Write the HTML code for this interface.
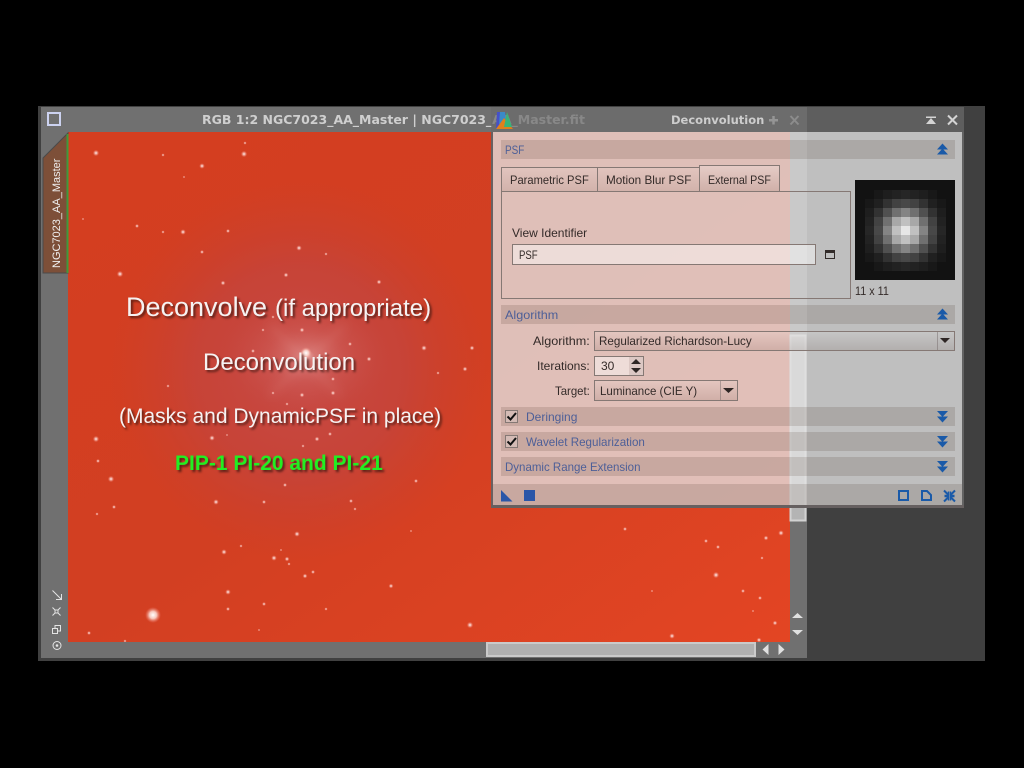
<!DOCTYPE html>
<html><head><meta charset="utf-8"><style>
html,body{margin:0;padding:0;background:#000;width:1024px;height:768px;overflow:hidden;font-family:"Liberation Sans",sans-serif}
div,span,svg{position:absolute}
svg{overflow:visible}
.t{white-space:nowrap;line-height:1;font-family:"Liberation Sans",sans-serif}
.ui{font-size:12px;color:#332a28;white-space:nowrap;line-height:14px;transform-origin:0 0}
.bar{left:501px;width:454px;height:19px;background:rgba(40,15,0,.13)}
.bt{font-size:12px;color:#4d5f98;white-space:nowrap;line-height:14px;transform-origin:0 0}
.sl{color:#f6f2f2;white-space:nowrap;line-height:1;text-shadow:2px 2px 2px rgba(50,20,15,.75)}
.tab{border:1px solid #857874;border-bottom:none;box-sizing:border-box;background:linear-gradient(rgba(255,255,255,.08),rgba(90,60,50,.1))}
.fld{border:1px solid #857874;box-sizing:border-box}
.psf{left:864.5px;top:189.5px;width:81px;height:81px;display:grid;grid-template-columns:repeat(9,9px);grid-auto-rows:9px}
.psf b{display:block}
</style></head><body>
<div style="left:38px;top:106px;width:947px;height:555px;background:#404040"></div>
<div style="left:41px;top:107px;width:766px;height:551px;background:#707070"></div>

<svg style="left:0;top:0" width="1024" height="768" viewBox="0 0 1024 768">
<defs>
<linearGradient id="b" x1="0" y1="0" x2="1" y2="1"><stop offset="0" stop-color="#d43e20"/><stop offset=".5" stop-color="#d23f22"/><stop offset="1" stop-color="#e34523"/></linearGradient>
<radialGradient id="n" gradientUnits="userSpaceOnUse" cx="300" cy="370" r="190"><stop offset="0" stop-color="#c64c4a" stop-opacity=".9"/><stop offset=".55" stop-color="#c24540" stop-opacity=".7"/><stop offset="1" stop-color="#c64030" stop-opacity="0"/></radialGradient>
<radialGradient id="c"><stop offset="0" stop-color="#fff" stop-opacity=".6"/><stop offset=".1" stop-color="#f0c0c0" stop-opacity=".35"/><stop offset=".45" stop-color="#dc8080" stop-opacity=".2"/><stop offset="1" stop-color="#c85050" stop-opacity="0"/></radialGradient>
<radialGradient id="s" r=".4"><stop offset="0" stop-color="#fff" stop-opacity=".95"/><stop offset=".4" stop-color="#f8c0b8" stop-opacity=".75"/><stop offset="1" stop-color="#f08070" stop-opacity="0"/></radialGradient>
<radialGradient id="bs"><stop offset="0" stop-color="#fff"/><stop offset=".45" stop-color="#fbd8d0" stop-opacity=".9"/><stop offset="1" stop-color="#f08070" stop-opacity="0"/></radialGradient>
<clipPath id="im"><rect x="68" y="132" width="722" height="510"/></clipPath>
<filter id="bl"><feGaussianBlur stdDeviation="5"/></filter>
</defs>
<g clip-path="url(#im)">
<rect x="68" y="132" width="722" height="510" fill="url(#b)"/>
<ellipse cx="300" cy="370" rx="190" ry="190" fill="url(#n)"/>
<ellipse cx="306" cy="356" rx="85" ry="60" fill="url(#c)"/>
<g stroke="#f4c8c8" stroke-opacity=".3" stroke-width="2" filter="url(#bl)"><path d="M270 325L340 395M345 325L270 395"/></g>
<circle cx="153" cy="615" r="8" fill="url(#bs)"/>
<circle cx="306" cy="353" r="6" fill="url(#bs)"/>
<g fill="url(#s)">
<circle cx="96" cy="153" r="4"/><circle cx="244" cy="154" r="4"/><circle cx="202" cy="166" r="3.5"/><circle cx="120" cy="274" r="4"/><circle cx="183" cy="232" r="3.5"/><circle cx="299" cy="248" r="3.5"/><circle cx="286" cy="275" r="3"/><circle cx="223" cy="283" r="3"/><circle cx="379" cy="282" r="3"/>
<circle cx="245" cy="143" r="2"/><circle cx="163" cy="155" r="2"/><circle cx="137" cy="226" r="2.5"/><circle cx="163" cy="232" r="2"/><circle cx="228" cy="231" r="2.5"/><circle cx="202" cy="252" r="2.5"/><circle cx="326" cy="254" r="2"/><circle cx="83" cy="219" r="1.5"/><circle cx="184" cy="177" r="1.5"/>
<circle cx="369" cy="359" r="3"/><circle cx="168" cy="386" r="2"/><circle cx="302" cy="330" r="3"/><circle cx="273" cy="317" r="2"/><circle cx="263" cy="330" r="2"/><circle cx="253" cy="351" r="2.5"/><circle cx="350" cy="344" r="2.5"/><circle cx="333" cy="379" r="2.5"/><circle cx="333" cy="393" r="3"/><circle cx="302" cy="395" r="3"/><circle cx="273" cy="393" r="2"/><circle cx="212" cy="438" r="3.5"/><circle cx="227" cy="435" r="1.5"/><circle cx="317" cy="439" r="3"/><circle cx="303" cy="446" r="2"/><circle cx="330" cy="434" r="2.5"/><circle cx="287" cy="404" r="2"/>
<circle cx="96" cy="439" r="4"/><circle cx="98" cy="461" r="2.5"/><circle cx="111" cy="479" r="4"/>
<circle cx="424" cy="348" r="3.5"/><circle cx="472" cy="348" r="3"/><circle cx="465" cy="369" r="3"/><circle cx="438" cy="373" r="2"/><circle cx="416" cy="481" r="2.5"/>
<circle cx="114" cy="507" r="2.5"/><circle cx="97" cy="514" r="2"/><circle cx="216" cy="502" r="3.5"/><circle cx="264" cy="502" r="2.5"/><circle cx="285" cy="485" r="2.5"/><circle cx="351" cy="501" r="2.5"/><circle cx="355" cy="509" r="2"/>
<circle cx="297" cy="534" r="3.5"/><circle cx="224" cy="552" r="3.5"/><circle cx="241" cy="546" r="2"/><circle cx="274" cy="558" r="3.5"/><circle cx="287" cy="559" r="3"/><circle cx="289" cy="564" r="2"/><circle cx="281" cy="550" r="1.5"/><circle cx="305" cy="576" r="3"/><circle cx="313" cy="572" r="2.5"/><circle cx="391" cy="586" r="3"/><circle cx="228" cy="592" r="3.5"/><circle cx="228" cy="609" r="2.5"/><circle cx="264" cy="604" r="2.5"/><circle cx="326" cy="609" r="2"/><circle cx="89" cy="633" r="2.5"/><circle cx="125" cy="641" r="2"/><circle cx="259" cy="630" r="1.5"/>
<circle cx="470" cy="625" r="4"/><circle cx="625" cy="529" r="2.5"/><circle cx="672" cy="636" r="3.5"/><circle cx="411" cy="531" r="1.5"/><circle cx="652" cy="591" r="1.5"/>
<circle cx="781" cy="533" r="3.5"/><circle cx="766" cy="538" r="3"/><circle cx="706" cy="541" r="2.5"/><circle cx="718" cy="547" r="2.5"/><circle cx="762" cy="558" r="2"/><circle cx="716" cy="575" r="4"/><circle cx="743" cy="591" r="2.5"/><circle cx="760" cy="598" r="2.5"/><circle cx="753" cy="611" r="1.5"/><circle cx="775" cy="623" r="3"/><circle cx="759" cy="640" r="3"/>
</g>
</g>
<!-- doc tab -->
<path d="M43 158L68 133V273H43Z" fill="#7d4f38" stroke="#4a4a4a" stroke-width="1"/>
<rect x="66.5" y="134" width="2" height="139" fill="#3f9a3c"/>
<!-- window button -->
<rect x="48" y="113" width="12" height="12" fill="none" stroke="#ccd2f0" stroke-width="2"/>
<!-- left icons -->
<g fill="none" stroke="#e4e4e4" stroke-width="1">
<path d="M52.500 590.500L61 599M61.500 594V599.500H56"/>
<path d="M52.500 607.500L55 610M60.500 607.500L58 610M52.500 615.500L55 613M60.500 615.500L58 613M55 610H58V613H55Z"/>
<rect x="52.500" y="628.500" width="5" height="5"/><path d="M55 628.500V625.500H60.500V631H57.500"/>
<circle cx="57" cy="645.500" r="4"/><circle cx="57" cy="645.500" r=".8" fill="#e4e4e4"/>
</g>
<!-- v scroll thumb -->
<rect x="790.500" y="335.500" width="15" height="185" fill="#b4b4b4" stroke="#d2d2d2" stroke-width="2"/>
<path d="M797.500 613L803 618H792ZM792 630H803L797.500 635Z" fill="#e0e0e0"/>
<!-- h scroll -->
<rect x="487" y="643" width="268" height="13" fill="#b0b0b0" stroke="#cacaca" stroke-width="2"/>
<path d="M768.500 644V655L762.500 649.500ZM778.500 644V655L784.500 649.500Z" fill="#e0e0e0"/>
</svg>

<div class="t" style="left:202px;top:114px;font-family:'DejaVu Sans',sans-serif;font-weight:bold;font-size:12.500px;color:#cfcfcf">RGB 1:2 NGC7023_AA_Master | NGC7023_AA_Master.fit</div>
<div class="t" style="left:51px;top:158px;width:12px;height:110px;writing-mode:vertical-rl;transform:rotate(180deg);font-size:11px;color:#f0f0f0;text-align:left;line-height:12px">NGC7023_AA_Master</div>

<!-- slide text -->
<div class="sl" style="left:126px;top:294px;font-size:27px">Deconvolve</div>
<div class="sl" style="left:275px;top:297px;font-size:24px">(if appropriate)</div>
<div class="sl" style="left:203px;top:351px;font-size:24px">Deconvolution</div>
<div class="sl" style="left:119px;top:406px;font-size:21px">(Masks and DynamicPSF in place)</div>
<div class="sl" style="left:175px;top:453px;font-size:21px;font-weight:bold;color:#22ee22">PIP-1 PI-20 and PI-21</div>

<!-- dialog -->
<div style="left:491px;top:107px;width:473px;height:25px;background:rgba(107,107,107,.71)"></div>
<div style="left:491px;top:132px;width:2px;height:376px;background:#6a6060"></div>
<div style="left:962px;top:132px;width:2px;height:376px;background:rgba(107,107,107,.8)"></div>
<div style="left:491px;top:505px;width:473px;height:3px;background:#666060"></div>
<div style="left:493px;top:132px;width:469px;height:373px;background:rgba(227,227,227,.78)"></div>

<svg style="left:0;top:0" width="1024" height="768" viewBox="0 0 1024 768">
<path d="M496 129L497 112H505L506 124Z" fill="#4650c8"/>
<path d="M500 112H505L506 122L499 124Z" fill="#3a8ac8"/>
<path d="M496 129L504 118L513 129Z" fill="#e0801c"/>
<path d="M507 112L512 127H504Z" fill="#38b478"/>
<path d="M926 116.500H936V118H926ZM931 118L936 124H926Z" fill="#d4d4d4"/>
<path d="M948 115.500L957 124.500M957 115.500L948 124.500" stroke="#d4d4d4" stroke-width="2" fill="none"/>
<path d="M773.500 116V124.500M769 120.300H778" stroke="#a0a0a0" stroke-width="2.500" fill="none" opacity=".8"/>
<path d="M790.500 116L798.500 124.500M798.500 116L790.500 124.500" stroke="#8c8c8c" stroke-width="2" fill="none"/>
</svg>
<div class="t" style="left:671px;top:115px;font-family:'DejaVu Sans',sans-serif;font-weight:bold;font-size:11.500px;color:#cdcdcd">Deconvolution</div>

<!-- PSF section -->
<div class="bar" style="top:140px"></div><div class="bt" style="left:505px;top:143px;transform:scaleX(.83)">PSF</div>
<div class="tab" style="left:501px;top:167px;width:97px;height:25px"></div>
<div class="tab" style="left:597px;top:167px;width:103px;height:25px"></div>
<div class="tab" style="left:699px;top:165px;width:81px;height:27px;background:linear-gradient(rgba(255,255,255,.2),rgba(90,60,50,.12))"></div>
<div class="ui" style="left:510px;top:173px;transform:scaleX(.93)">Parametric PSF</div>
<div class="ui" style="left:606px;top:173px;transform:scaleX(.977)">Motion Blur PSF</div>
<div class="ui" style="left:708px;top:173px;transform:scaleX(.89)">External PSF</div>
<div class="fld" style="left:501px;top:191px;width:350px;height:108px"></div>
<div class="ui" style="left:512px;top:226px">View Identifier</div>
<div class="fld" style="left:512px;top:244px;width:304px;height:21px;background:rgba(255,255,255,.45)"></div>
<div class="ui" style="left:519px;top:248px;transform:scaleX(.8)">PSF</div>
<svg style="left:0;top:0" width="1024" height="768" viewBox="0 0 1024 768"><rect x="825.500" y="250.500" width="9" height="8" fill="none" stroke="#332c2a"/><rect x="825" y="250" width="10" height="3" fill="#332c2a"/></svg>
<div style="left:855px;top:180px;width:100px;height:100px;background:#121212"></div>
<div class="psf">
<b style="background:#121212"></b><b style="background:#181818"></b><b style="background:#1e1e1e"></b><b style="background:#222"></b><b style="background:#262626"></b><b style="background:#222"></b><b style="background:#1e1e1e"></b><b style="background:#181818"></b><b style="background:#121212"></b>
<b style="background:#181818"></b><b style="background:#202020"></b><b style="background:#323232"></b><b style="background:#424242"></b><b style="background:#484848"></b><b style="background:#424242"></b><b style="background:#323232"></b><b style="background:#202020"></b><b style="background:#181818"></b>
<b style="background:#1e1e1e"></b><b style="background:#323232"></b><b style="background:#505050"></b><b style="background:#707070"></b><b style="background:#848484"></b><b style="background:#707070"></b><b style="background:#505050"></b><b style="background:#323232"></b><b style="background:#1e1e1e"></b>
<b style="background:#222"></b><b style="background:#424242"></b><b style="background:#707070"></b><b style="background:#a8a8a8"></b><b style="background:#c0c0c0"></b><b style="background:#a8a8a8"></b><b style="background:#707070"></b><b style="background:#424242"></b><b style="background:#222"></b>
<b style="background:#262626"></b><b style="background:#484848"></b><b style="background:#848484"></b><b style="background:#c0c0c0"></b><b style="background:#e6e6e6"></b><b style="background:#c0c0c0"></b><b style="background:#848484"></b><b style="background:#484848"></b><b style="background:#262626"></b>
<b style="background:#222"></b><b style="background:#424242"></b><b style="background:#707070"></b><b style="background:#a8a8a8"></b><b style="background:#c0c0c0"></b><b style="background:#a8a8a8"></b><b style="background:#707070"></b><b style="background:#424242"></b><b style="background:#222"></b>
<b style="background:#1e1e1e"></b><b style="background:#323232"></b><b style="background:#505050"></b><b style="background:#707070"></b><b style="background:#848484"></b><b style="background:#707070"></b><b style="background:#505050"></b><b style="background:#323232"></b><b style="background:#1e1e1e"></b>
<b style="background:#181818"></b><b style="background:#202020"></b><b style="background:#323232"></b><b style="background:#424242"></b><b style="background:#484848"></b><b style="background:#424242"></b><b style="background:#323232"></b><b style="background:#202020"></b><b style="background:#181818"></b>
<b style="background:#121212"></b><b style="background:#181818"></b><b style="background:#1e1e1e"></b><b style="background:#222"></b><b style="background:#262626"></b><b style="background:#222"></b><b style="background:#1e1e1e"></b><b style="background:#181818"></b><b style="background:#121212"></b>
</div>
<div class="ui" style="left:855px;top:284px;transform:scaleX(.9)">11 x 11</div>

<!-- Algorithm -->
<div class="bar" style="top:305px"></div><div class="bt" style="left:505px;top:308px;transform:scaleX(1.05)">Algorithm</div>
<div class="ui" style="left:533px;top:334px;transform:scaleX(1.05)">Algorithm:</div>
<div class="fld" style="left:594px;top:331px;width:361px;height:20px;background:linear-gradient(rgba(255,255,255,.1),rgba(90,60,50,.12))"></div>
<div style="left:937px;top:332px;width:1px;height:18px;background:rgba(110,100,100,.45)"></div>
<div class="ui" style="left:599px;top:334px;transform:scaleX(.97)">Regularized Richardson-Lucy</div>
<div class="ui" style="left:537px;top:359px">Iterations:</div>
<div class="fld" style="left:594px;top:356px;width:50px;height:20px;background:rgba(255,255,255,.45)"></div>
<div style="left:629px;top:357px;width:14px;height:18px;background:#dcc8c4"></div>
<div class="ui" style="left:601px;top:359px">30</div>
<div class="ui" style="left:555px;top:384px;transform:scaleX(.95)">Target:</div>
<div class="fld" style="left:594px;top:380px;width:144px;height:21px;background:linear-gradient(rgba(255,255,255,.1),rgba(90,60,50,.12))"></div>
<div style="left:720px;top:381px;width:1px;height:19px;background:rgba(110,100,100,.45)"></div>
<div class="ui" style="left:600px;top:384px;transform:scaleX(.96)">Luminance (CIE Y)</div>

<div class="bar" style="top:407px"></div><div class="bt" style="left:526px;top:410px">Deringing</div>
<div class="bar" style="top:432px"></div><div class="bt" style="left:526px;top:435px;transform:scaleX(.967)">Wavelet Regularization</div>
<div class="bar" style="top:457px"></div><div class="bt" style="left:505px;top:460px;transform:scaleX(.958)">Dynamic Range Extension</div>
<div style="left:493px;top:484px;width:469px;height:21px;background:rgba(40,15,0,.13)"></div>

<svg style="left:0;top:0" width="1024" height="768" viewBox="0 0 1024 768">
<!-- combo arrows -->
<g fill="#2e2624"><path d="M940 338H950L945 343ZM723 388H734L728.500 393ZM631 364L636 359L641 364ZM631 368H641L636 373Z"/></g>
<!-- checkboxes -->
<g fill="rgba(255,255,255,.22)" stroke="#857874"><rect x="505.500" y="410.500" width="12" height="12"/><rect x="505.500" y="435.500" width="12" height="12"/></g>
<g fill="none" stroke="#111" stroke-width="2"><path d="M507.500 416.500L510.500 419.500L516 413M507.500 441.500L510.500 444.500L516 438"/></g>
<!-- section chevrons -->
<g fill="#1a5aa8"><path d="M942.500 143.500L948 149.500H937ZM942.500 148.500L948 154.500H937Z"/><path d="M942.500 308.500L948 314.500H937ZM942.500 313.500L948 319.500H937Z"/>
<path d="M937 411H948L942.500 417ZM937 416.500H948L942.500 422.500ZM937 436H948L942.500 442ZM937 441.500H948L942.500 447.500ZM937 461H948L942.500 467ZM937 466.500H948L942.500 472.500Z"/></g>
<!-- bottom icons -->
<path d="M501 490L512.500 501.500H501Z" fill="#2a56a8"/>
<rect x="524" y="490" width="11" height="11" fill="#2a56a8"/>
<rect x="899" y="491" width="9" height="9" fill="none" stroke="#1a5aa8" stroke-width="2"/>
<path d="M922 491H927L931 495V500H922Z" fill="none" stroke="#1a5aa8" stroke-width="2"/>
<path d="M944 490.500L948.500 495M955 490.500L950.500 495M944 501.500L948.500 497M955 501.500L950.500 497" stroke="#1a5aa8" stroke-width="2" fill="none"/>
<path d="M948.500 491.500V495.500H944.500M950.500 491.500V495.500H954.500M948.500 500.500V496.500H944.500M950.500 500.500V496.500H954.500" stroke="#1a5aa8" stroke-width="1.500" fill="none"/>
</svg>
</body></html>
